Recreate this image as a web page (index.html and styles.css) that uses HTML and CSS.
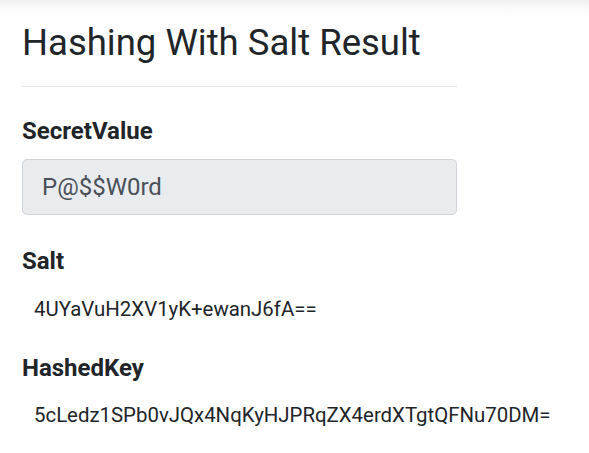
FILE: index.html
```html
<!DOCTYPE html>
<html lang="en">
<head>
<meta charset="utf-8">
<title>Hashing With Salt Result</title>
<link rel="stylesheet" href="styles.css">
</head>
<body>
<div class="top-shade"></div>
<main class="content">
  <h2 class="title">Hashing With Salt Result</h2>
  <hr class="divider">
  <section class="field field-secret">
    <label class="field-label">SecretValue</label>
    <div class="form-control">P@$$W0rd</div>
  </section>
  <section class="field field-salt">
    <div class="field-label">Salt</div>
    <div class="field-value">4UYaVuH2XV1yK+ewanJ6fA==</div>
  </section>
  <section class="field field-hash">
    <div class="field-label">HashedKey</div>
    <div class="field-value">5cLedz1SPb0vJQx4NqKyHJPRqZX4erdXTgtQFNu70DM=</div>
  </section>
</main>
</body>
</html>
```
FILE: styles.css
```css
html, body {
  margin: 0;
  padding: 0;
  background: #ffffff;
}

body {
  font-family: Roboto, "Open Sans", sans-serif;
  color: #212529;
}

.top-shade {
  height: 16px;
  background: linear-gradient(to bottom, #f1f1f1 0%, #f8f8f8 45%, #ffffff 100%);
}

.content {
  width: 435px;
  padding-left: 22px;
  display: flex;
  flex-direction: column;
}

.title {
  margin: 8px 0 0 0;
  font-size: 36.5px;
  line-height: 38px;
  font-weight: 400;
  color: #212529;
  white-space: nowrap;
}

.divider {
  margin: 24px 0 0 0;
  border: 0;
  border-top: 1px solid #e5e5e5;
  height: 0;
}

.field {
  display: flex;
  flex-direction: column;
}

.field-label {
  font-size: 24px;
  line-height: 30px;
  font-weight: 700;
}

.field-secret {
  margin-top: 29px;
  gap: 13px;
}

.form-control {
  box-sizing: border-box;
  height: 56px;
  padding: 9px 19px;
  font-size: 24px;
  line-height: 36px;
  color: #495057;
  background: #e9ecef;
  border: 1px solid #ced4da;
  border-radius: 5px;
}

.field-salt {
  margin-top: 31px;
  gap: 18px;
}

.field-hash {
  margin-top: 29px;
  gap: 17px;
}

.field-value {
  font-size: 20.4px;
  line-height: 30px;
  padding-left: 12px;
  white-space: nowrap;
}
```
